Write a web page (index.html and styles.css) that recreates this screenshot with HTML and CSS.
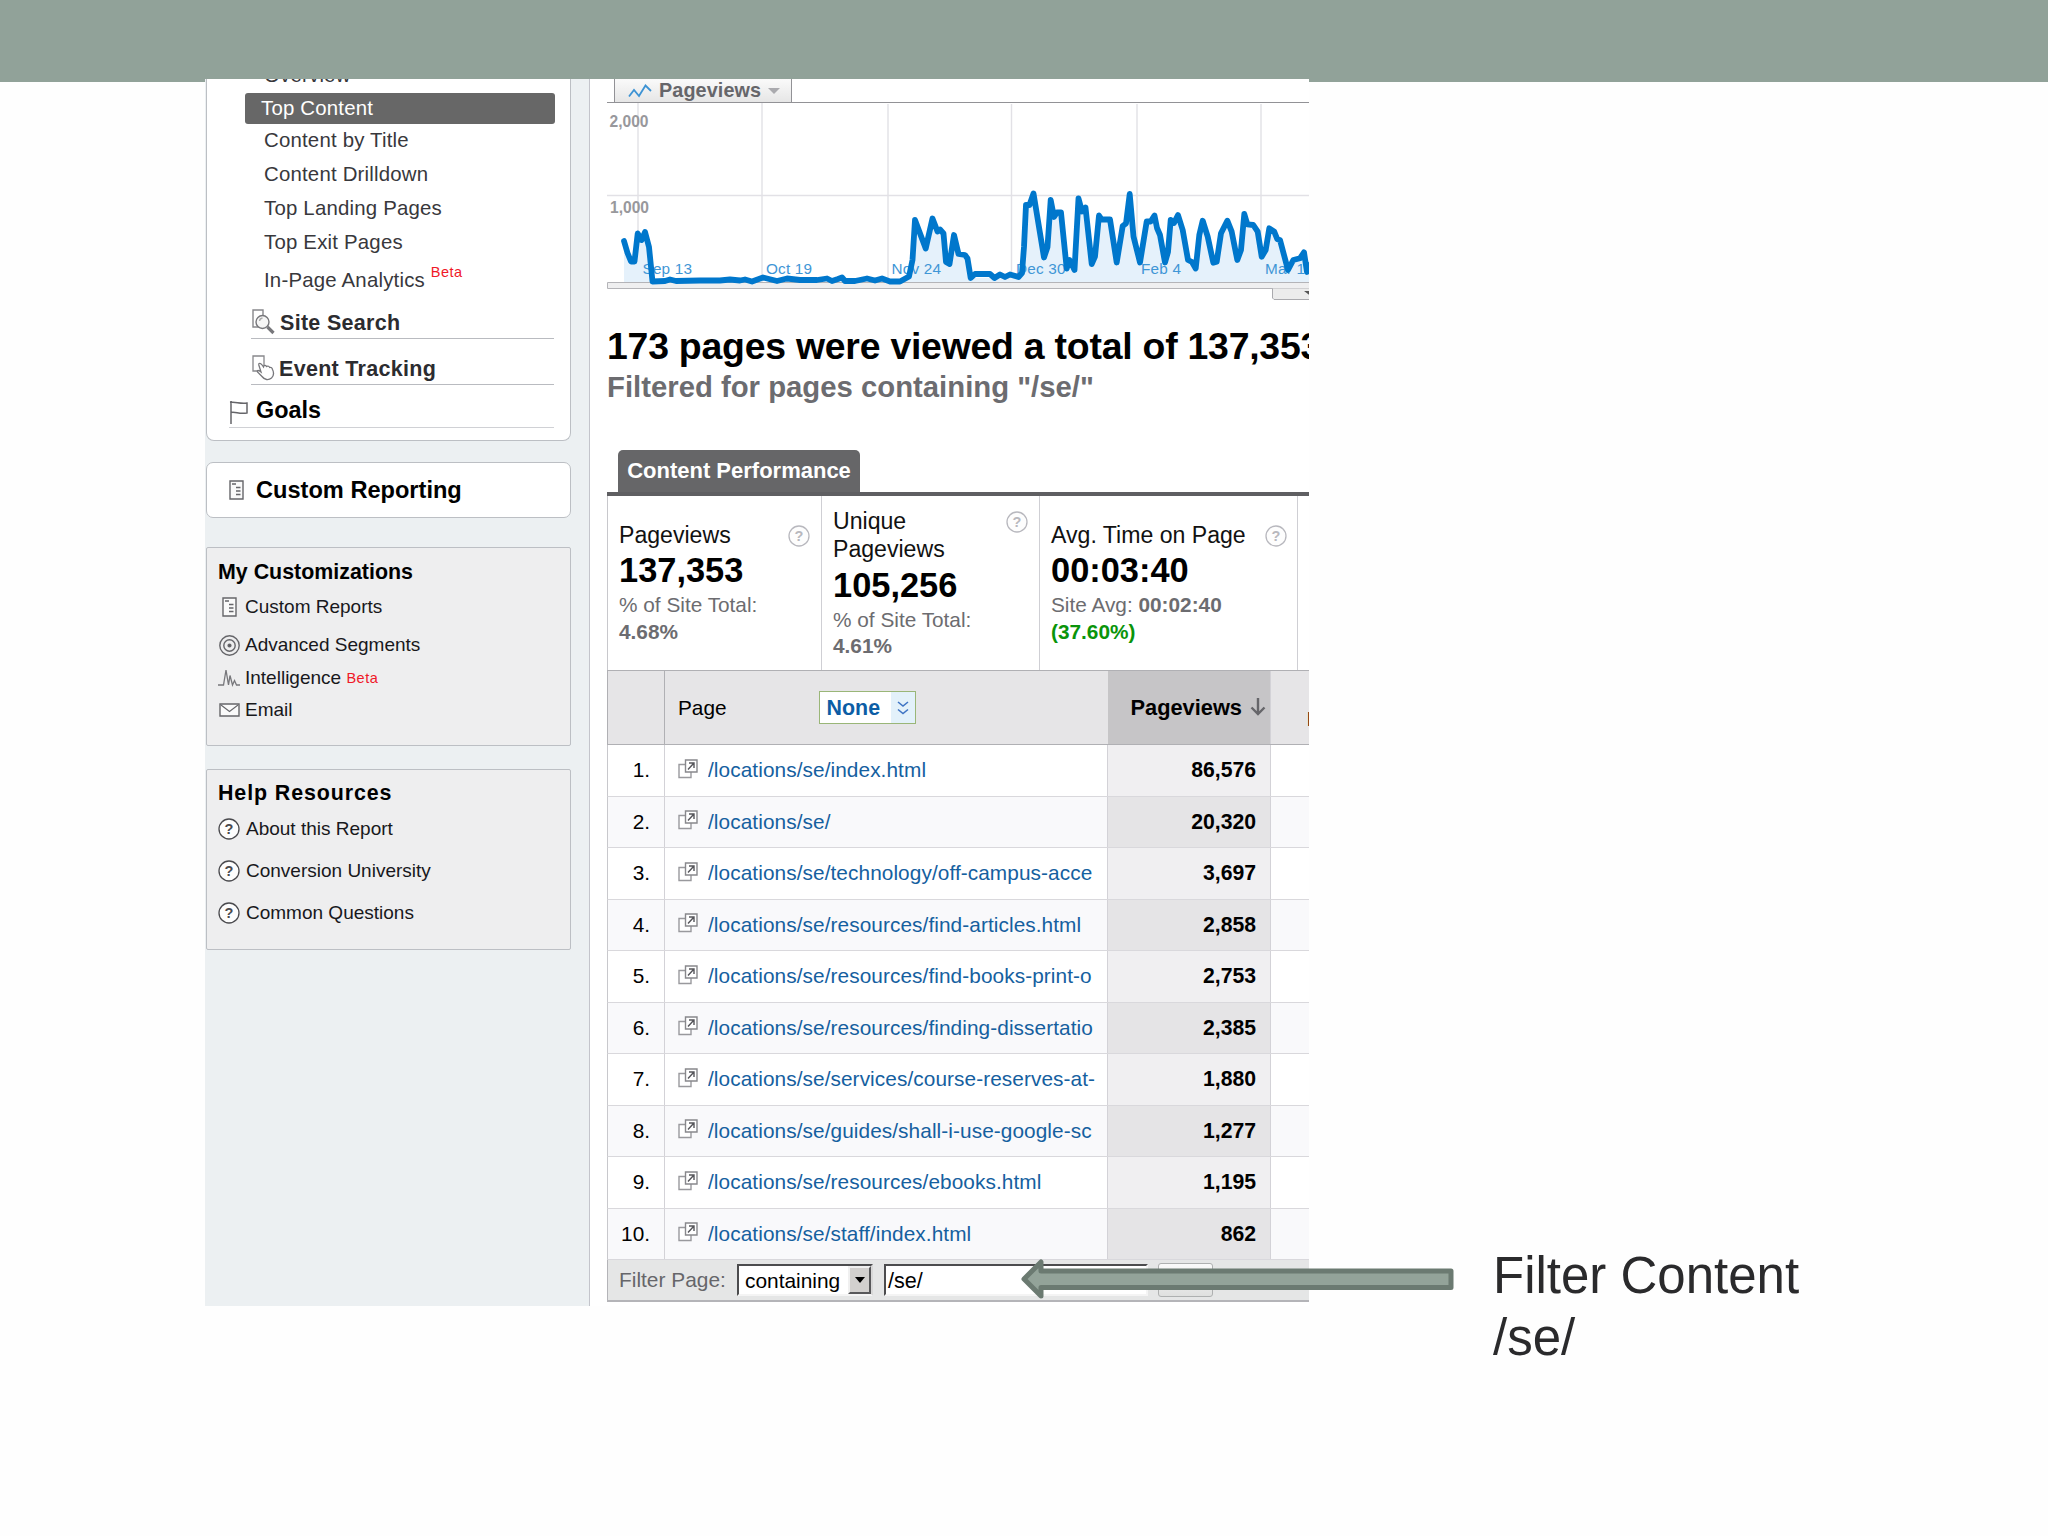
FILE: index.html
```html
<!DOCTYPE html>
<html lang="en">
<head>
  <meta charset="UTF-8" />
  <meta name="viewport" content="width=device-width, initial-scale=1.0" />
  <title>Filter Content</title>
  <link rel="stylesheet" href="styles.css">
</head>
<body>
  <!-- shared icons -->
  <svg class="defs" width="0" height="0">
    <symbol id="i-report" viewBox="0 0 15 20">
      <path d="M1 1h13v18H1z" fill="#fafafa" stroke="#66666a" stroke-width="1.4"/>
      <path d="M3 4h4M7 7.500h4.500M7 11h4.500M7 14.500h4.500" stroke="#66666a" stroke-width="1.4"/>
    </symbol>
    <symbol id="i-help" viewBox="0 0 22 22">
      <circle cx="11" cy="11" r="10" fill="#fdfdfd" stroke="currentColor" stroke-width="1.3"/>
      <text x="11" y="16" text-anchor="middle" class="q">?</text>
    </symbol>
    <symbol id="i-open" viewBox="0 0 20 20">
      <path d="M1 5.500h12v13H1z" fill="#fff" stroke="#99999d" stroke-width="1.4"/>
      <path d="M7.500 1h11.500v12H7.500z" fill="#fff" stroke="#88888c" stroke-width="1.4"/>
      <path d="M10 10.500l5.500-6M11 4h5v5" fill="none" stroke="#55555a" stroke-width="1.4"/>
    </symbol>
  </svg>

  <div class="bar"></div>

  <div class="slide">
    <div class="panel">
      <div class="sidebar">
        <div class="box nav">
          <div class="item first">Overview</div>
          <div class="item selected">Top Content</div>
          <div class="item">Content by Title</div>
          <div class="item">Content Drilldown</div>
          <div class="item">Top Landing Pages</div>
          <div class="item">Top Exit Pages</div>
          <div class="item inpage">In-Page Analytics <span class="beta up">Beta</span></div>
          <div class="section search">
            <svg width="24" height="26" viewBox="0 0 24 26" fill="none" stroke="#77777b" stroke-width="1.4">
              <path d="M2 1h10v17H2z" stroke="#88888c"/>
              <circle cx="11.500" cy="13" r="6.500" fill="#f6f6f6"/>
              <path d="M8.500 12a3.500 3.500 0 0 1 3-3" stroke="#aaa"/>
              <path d="M16.500 18l6 6" stroke-width="3.200"/>
            </svg>
            <span>Site Search</span>
          </div>
          <div class="section event">
            <svg width="24" height="26" viewBox="0 0 24 26" fill="none" stroke="#77777b" stroke-width="1.3">
              <path d="M2 1h11v15H2z" stroke="#88888c"/>
              <path d="M7.500 9c1.500-1.500 3 0 5 3 .5-2 2-2 3-.5 1.500-1 2.800 0 3.200 1 1.500-.5 2.500.5 2.800 2 1.500 3 1.500 6-1 8.500-3 2.500-7 2-9.500-1.500L6.500 17c-.5-2 1-2 3.500 0L7.500 9" fill="#fff"/>
            </svg>
            <span>Event Tracking</span>
          </div>
          <div class="section goals">
            <svg width="20" height="24" viewBox="0 0 20 24" fill="none" stroke="#66666a" stroke-width="1.5">
              <path d="M2 1v23M1 2.500c6-1 9 1.500 17 .5v10c-8 1.500-11-1.500-16-.5"/>
            </svg>
            <span>Goals</span>
          </div>
        </div>

        <div class="box reporting">
          <svg width="15" height="20"><use href="#i-report"/></svg>
          <span>Custom Reporting</span>
        </div>

        <div class="box links custom">
          <h3>My Customizations</h3>
          <div class="link l1"><i><svg width="15" height="20"><use href="#i-report"/></svg></i>Custom Reports</div>
          <div class="link l2"><i><svg width="21" height="21" viewBox="0 0 21 21" fill="none" stroke="#66666a" stroke-width="1.4">
            <circle cx="10.500" cy="10.500" r="9.700"/><circle cx="10.500" cy="10.500" r="5.700"/><circle cx="10.500" cy="10.500" r="1.400" fill="#55555a"/>
          </svg></i>Advanced Segments</div>
          <div class="link l3"><i><svg width="22" height="20" viewBox="0 0 22 20" fill="none" stroke="#77777b" stroke-width="1.3">
            <path d="M0 17h5.500L8 2l2.500 15L12 7.500 14.500 17l2-4.500L18.500 17H22"/>
          </svg></i>Intelligence <span class="beta">Beta</span></div>
          <div class="link l4"><i><svg width="21" height="14" viewBox="0 0 21 14" fill="#fafafa" stroke="#66666a" stroke-width="1.4">
            <path d="M1 1h19v12H1z"/><path d="M2 2l8.500 6.500L19 2" fill="none" stroke-width="1.100"/>
          </svg></i>Email</div>
        </div>

        <div class="box links help">
          <h3>Help Resources</h3>
          <div class="link"><i><svg class="dark" width="22" height="22"><use href="#i-help"/></svg></i>About this Report</div>
          <div class="link"><i><svg class="dark" width="22" height="22"><use href="#i-help"/></svg></i>Conversion University</div>
          <div class="link"><i><svg class="dark" width="22" height="22"><use href="#i-help"/></svg></i>Common Questions</div>
        </div>
      </div>

      <div class="main">
        <div class="tabline">
          <div class="metric">
            <svg width="24" height="14" viewBox="0 0 24 14" fill="none" stroke="#3d93d4" stroke-width="1.800">
              <path d="M1 12.500L6 6l5 6 6.500-10.500L23 7"/>
            </svg>
            <span>Pageviews</span>
            <b class="caret"></b>
          </div>
        </div>

        <svg class="chart" width="702" height="217" viewBox="607 103 702 217">
          <path class="grid" d="M638 103V282M762 103V282M888 104V282M1011.500 104V282M1137 104V282M1261 104V282M607 195.500H1309"/>
          <path class="area" d="M624 282V241L627.500 253 631 261.500H634.500L637.700 233.500 641.700 240 645 232 649 247 652.500 282zM900 282L909 276.500 912.500 260 915 220 925.700 248.500 932.500 218.500 937.500 231.500 943.500 233.500 947.500 263 954 235 958.500 254 965 255 970.700 278 1018.500 277 1022 273 1026 205 1033.500 193.500 1044 257.500 1050.700 200 1054 217 1061 212.500 1066.700 268.500 1074.500 270 1078.500 198.500 1085.500 207.500 1091.700 264 1099 215.500 1110 219.500 1116.700 262.500 1122.700 226 1129.700 194 1140 262.500 1146.700 221.500 1154.500 215.500 1165 262.500 1170.700 220 1178 215 1188 260 1195.700 268.500 1202.700 220.700 1213.300 262.700 1221 233.300 1227.300 220.700 1237.300 260 1244.300 214 1253.300 225 1261.700 256.700 1269.300 228.300 1280 240 1288 270 1304 252.300 1309 270V282z"/>
          <g class="ylabel">
            <text x="609.500" y="127">2,000</text>
            <text x="610" y="212.500">1,000</text>
          </g>
          <g class="xlabel">
            <text x="642.500" y="274">Sep 13</text>
            <text x="766" y="274">Oct 19</text>
            <text x="891.500" y="274">Nov 24</text>
            <text x="1016" y="274">Dec 30</text>
            <text x="1141" y="274">Feb 4</text>
            <text x="1265" y="274">Mar 1</text>
          </g>
          <path class="track" d="M607.500 282.500H1312V288.500H607.500z"/>
          <path class="line" d="M624 241L627.500 253 631 261.500H634.500L637.700 233.500 641.700 240 645 232 649 247 652.500 281.500 665 281 670 279.500 676 281 700 280.500 720 280.500 730 279.500 740 280.500 745 279.500 752 281.500 763 277.500 777 281 787 278.500 800 280 817 280 827 278.500 832 281 838 279 842 277.500 845 281 855 281 867 278.500 875 280.500 882 278.500 890 281.500H900L909 276.500 912.500 260 915 220 925.700 248.500 932.500 218.500 937.500 231.500 940 229.500 943.500 233.500 946 262 949.500 264 954 235 958.500 254 965 255 967.500 258.500 970.700 278 975 274H990L994.500 278 1000 274.500 1005 277 1010 274.500 1018.500 277 1022 273 1024 247 1026 205H1029.500L1033.500 193.500 1044 257.500 1047.500 247 1050.700 200 1054 217 1057 212.500H1061L1066.700 268.500 1069.500 260 1074.500 270 1078.500 198.500 1082 211.500 1085.500 207.500 1091.700 264 1095 256.500 1099 215.500 1101.700 219.500H1110L1116.700 262.500 1122.700 226 1126 223.500 1129.700 194 1133.500 236.500 1140 262.500 1146.700 221.500H1150.700L1154.500 215.500 1157 228 1160 235 1165 262.500 1168 252 1170.700 220 1174 223 1178 215 1182.700 230 1188 260 1192 262 1195.700 268.500 1199.300 235 1202.700 220.700 1207.700 236.700 1213.300 262.700 1216.700 261.700 1221 233.300 1227.300 220.700 1231.700 231.700 1237.300 260 1241 250 1244.300 214 1247.300 224.300 1253.300 225 1257.700 231.700 1261.700 256.700 1265.700 250 1269.300 228.300 1274.300 231.700 1277.300 239.300 1280 240 1288 270 1293.300 260 1300 258.300 1304 252.300 1307 272 1312 262"/>
          <path class="handle" d="M1272.500 288.500V298L1274 299.500H1312V288.500"/>
          <path d="M1304 291h8v6z" fill="#555"/>
        </svg>

        <h1>173 pages were viewed a total of 137,353</h1>
        <h2>Filtered for pages containing "/se/"</h2>

        <div class="perf"><span>Content Performance</span></div>

        <div class="summary">
          <div class="cell c1">
            <div class="label">Pageviews <svg width="22" height="22"><use href="#i-help"/></svg></div>
            <div class="value">137,353</div>
            <div class="sub">% of Site Total:<br><b>4.68%</b></div>
          </div>
          <div class="cell c2">
            <div class="label">Unique<br>Pageviews <svg width="22" height="22"><use href="#i-help"/></svg></div>
            <div class="value">105,256</div>
            <div class="sub">% of Site Total:<br><b>4.61%</b></div>
          </div>
          <div class="cell c3">
            <div class="label">Avg. Time on Page <svg width="22" height="22"><use href="#i-help"/></svg></div>
            <div class="value">00:03:40</div>
            <div class="sub">Site Avg: <b>00:02:40</b><br><b class="green">(37.60%)</b></div>
          </div>
        </div>

        <div class="row head">
          <div class="num"></div>
          <div class="page">Page
            <div class="none"><span>None</span><em><svg width="14" height="16" viewBox="0 0 14 16" fill="none" stroke="#3f74c4" stroke-width="1.600"><path d="M2 2l5 4 5-4M2 9.500l5 4 5-4"/></svg></em></div>
          </div>
          <div class="views">Pageviews
            <svg width="16" height="18" viewBox="0 0 16 18" fill="none" stroke="#66666a" stroke-width="2.400"><path d="M8 0v15.500M1.500 9.500L8 16l6.500-6.500"/></svg>
          </div>
          <div class="rest">P</div>
        </div>
        <div class="row"><div class="num">1.</div><div class="page"><svg width="20" height="20"><use href="#i-open"/></svg><a>/locations/se/index.html</a></div><div class="views">86,576</div><div class="rest"></div></div>
        <div class="row"><div class="num">2.</div><div class="page"><svg width="20" height="20"><use href="#i-open"/></svg><a>/locations/se/</a></div><div class="views">20,320</div><div class="rest"></div></div>
        <div class="row"><div class="num">3.</div><div class="page"><svg width="20" height="20"><use href="#i-open"/></svg><a>/locations/se/technology/off-campus-acce</a></div><div class="views">3,697</div><div class="rest"></div></div>
        <div class="row"><div class="num">4.</div><div class="page"><svg width="20" height="20"><use href="#i-open"/></svg><a>/locations/se/resources/find-articles.html</a></div><div class="views">2,858</div><div class="rest"></div></div>
        <div class="row"><div class="num">5.</div><div class="page"><svg width="20" height="20"><use href="#i-open"/></svg><a>/locations/se/resources/find-books-print-o</a></div><div class="views">2,753</div><div class="rest"></div></div>
        <div class="row"><div class="num">6.</div><div class="page"><svg width="20" height="20"><use href="#i-open"/></svg><a>/locations/se/resources/finding-dissertatio</a></div><div class="views">2,385</div><div class="rest"></div></div>
        <div class="row"><div class="num">7.</div><div class="page"><svg width="20" height="20"><use href="#i-open"/></svg><a>/locations/se/services/course-reserves-at-</a></div><div class="views">1,880</div><div class="rest"></div></div>
        <div class="row"><div class="num">8.</div><div class="page"><svg width="20" height="20"><use href="#i-open"/></svg><a>/locations/se/guides/shall-i-use-google-sc</a></div><div class="views">1,277</div><div class="rest"></div></div>
        <div class="row"><div class="num">9.</div><div class="page"><svg width="20" height="20"><use href="#i-open"/></svg><a>/locations/se/resources/ebooks.html</a></div><div class="views">1,195</div><div class="rest"></div></div>
        <div class="row"><div class="num">10.</div><div class="page"><svg width="20" height="20"><use href="#i-open"/></svg><a>/locations/se/staff/index.html</a></div><div class="views">862</div><div class="rest"></div></div>

        <div class="filter">
          <span class="flabel">Filter Page:</span>
          <div class="select"><span>containing</span><div class="drop"><b></b></div></div>
          <div class="input">/se/</div>
          <div class="go"></div>
        </div>
      </div>
    </div>

    <div class="caption">Filter Content<br>/se/</div>
  </div>

  <!-- arrow lies over the filter bar -->
  <svg class="arrow" width="440" height="46" viewBox="1018 1256 440 46">
    <path d="M1024 1279L1041 1262V1271H1451V1287.500H1041V1296z"/>
  </svg>
</body>
</html>
```
FILE: styles.css
```css
* {
  box-sizing: border-box;
}

body {
  margin: 0;
  width: 2048px;
  height: 1536px;
  overflow: hidden;
  position: relative;
  background-color: #fefefe;
  font-family: "Liberation Sans", Arial, sans-serif;
}

svg {
  display: block;
  flex: none;
}

.defs {
  display: none;
}

.bar {
  height: 82px;
  background-color: #91a299;
}

.slide {
  display: flex;
  margin-top: -3px;
  padding-left: 205px;
}

.panel {
  display: flex;
  width: 1104px;
  height: 1227px;
  overflow: hidden;
  position: relative;
  background-color: #fff;
}

/* sidebar */
.sidebar {
  width: 385px;
  height: 1227px;
  flex: none;
  padding-left: 1px;
  background-color: #ecf0f2;
  border-right: 1px solid #c3c4cb;
}

.box {
  width: 365px;
  border: 1px solid #bcbfc4;
}

.nav {
  height: 362px;
  border-top: none;
  border-radius: 0 0 8px 8px;
  background-color: #fff;
}

.item {
  height: 34px;
  line-height: 32px;
  padding-left: 57px;
  font-size: 20.4px;
  letter-spacing: 0.2px;
  color: #38383c;
  white-space: nowrap;
}

.item.first {
  display: flex;
  align-items: flex-end;
  height: 14px;
  line-height: 36px;
}

.item.selected {
  height: 31px;
  line-height: 30px;
  width: 310px;
  margin-left: 38px;
  padding-left: 16px;
  border-radius: 3px;
  background-color: #676767;
  color: #fff;
}

.item.inpage {
  height: 42px;
  line-height: 41px;
}

.beta {
  font-size: 14.5px;
  letter-spacing: 0.5px;
  color: #f01828;
}

.beta.up {
  position: relative;
  top: -10px;
}

.section {
  display: flex;
  align-items: center;
  height: 34px;
  margin-left: 44px;
  width: 303px;
  border-bottom: 1px solid #b9bbc0;
  font-size: 21.5px;
  font-weight: bold;
  letter-spacing: 0.3px;
  color: #2c2c30;
}

.search {
  margin-top: 3px;
}

.search span {
  margin-left: 5px;
  padding-top: 3px;
}

.event {
  margin-top: 12px;
}

.event span {
  margin-left: 4px;
  padding-top: 3px;
}

.goals {
  margin-top: 7px;
  height: 36px;
  margin-left: 22px;
  width: 325px;
  border-bottom-color: #d0d1d5;
  font-size: 23.4px;
  letter-spacing: 0;
  color: #000;
}

.goals span {
  margin-left: 7px;
  padding-top: 2px;
}

.goals svg {
  margin-top: 5px;
}

.reporting {
  display: flex;
  align-items: center;
  height: 56px;
  margin-top: 21px;
  padding-left: 22px;
  border-radius: 7px;
  background-color: #fff;
  font-size: 23.6px;
  font-weight: bold;
}

.reporting span {
  margin-left: 12px;
}

.links {
  padding: 8px 0 0 11px;
  border-radius: 2px;
  background-color: #eeeeef;
}

.links h3 {
  margin: 0;
  height: 32px;
  line-height: 33px;
  font-size: 21.4px;
}

.link {
  display: flex;
  align-items: center;
  height: 42px;
  font-size: 19px;
  white-space: pre;
  color: #18181c;
}

.link i {
  display: flex;
  justify-content: center;
  width: 22px;
  margin-right: 5px;
  font-style: normal;
}

.custom {
  height: 199px;
  margin-top: 29px;
}

.custom .l1 { height: 38px; }
.custom .l2 { height: 38px; }
.custom .l3 { height: 28px; }
.custom .l4 { height: 36px; }

.help {
  height: 181px;
  margin-top: 23px;
}

.help h3 {
  height: 30px;
  line-height: 31px;
  letter-spacing: 0.9px;
}

.help .link i {
  margin-right: 6px;
}

.q {
  font-size: 14.5px;
  font-weight: bold;
  fill: currentColor;
}

.dark {
  color: #4a4a4e;
}

/* main report */
.main {
  width: 702px;
  margin-left: 17px;
  flex: none;
}

.tabline {
  height: 24px;
  padding-left: 7px;
  border-bottom: 1px solid #929296;
}

.metric {
  display: flex;
  align-items: center;
  width: 178px;
  height: 23px;
  padding-left: 13px;
  border: 1px solid #929296;
  border-width: 0 1px;
  background: linear-gradient(#fafafa, #e6e6e6);
  font-size: 19.8px;
  font-weight: bold;
  letter-spacing: 0.1px;
  color: #66666a;
}

.metric span {
  margin-left: 7px;
}

.caret {
  margin-left: 7px;
  border: 6px solid transparent;
  border-top-color: #aaaaae;
  border-bottom: none;
}

.grid {
  fill: none;
  stroke: #e2e1e6;
  stroke-width: 1.4;
}

.area {
  fill: #e5f1fb;
}

.ylabel {
  font-size: 15.6px;
  font-weight: bold;
  fill: #98989c;
}

.xlabel {
  font-size: 15.3px;
  letter-spacing: 0.2px;
  fill: #3f96d6;
}

.track {
  fill: #efeff0;
  stroke: #b4b4b8;
}

.line {
  fill: none;
  stroke: #0077cc;
  stroke-width: 5.8;
  stroke-linejoin: round;
  stroke-linecap: round;
}

.handle {
  fill: #ececec;
  stroke: #aaaaae;
}

h1 {
  margin: 0;
  height: 51px;
  line-height: 52px;
  font-size: 37.4px;
  letter-spacing: -0.23px;
  white-space: nowrap;
  color: #000;
}

h2 {
  margin: 0;
  height: 31px;
  line-height: 32px;
  font-size: 29.3px;
  color: #6c6c70;
}

.perf {
  display: flex;
  margin-top: 48px;
  padding-left: 11px;
  border-bottom: 4px solid #5f5f62;
}

.perf span {
  width: 242px;
  height: 42px;
  line-height: 41px;
  text-align: center;
  border-radius: 5px 5px 0 0;
  background-color: #666668;
  font-size: 22px;
  font-weight: bold;
  color: #fff;
}

.summary {
  display: flex;
  height: 174px;
  border-left: 1px solid #c8c8cc;
}

.cell {
  display: flex;
  flex-direction: column;
  justify-content: center;
  padding-left: 11px;
  border-right: 1px solid #cfcfd4;
}

.c1 { width: 214px; }
.c2 { width: 218px; }
.c3 { width: 258px; }

.label {
  display: flex;
  justify-content: space-between;
  padding-right: 11px;
  line-height: 28.5px;
  font-size: 23.1px;
  color: #111;
}

.c3 .label {
  padding-right: 10px;
}

.label svg {
  margin-top: 4px;
  color: #b8b8be;
}

.value {
  line-height: 43px;
  font-size: 34.4px;
  font-weight: bold;
}

.sub {
  line-height: 26.5px;
  font-size: 20.8px;
  color: #6c6c70;
}

.green {
  color: #0a940a;
}

.row {
  display: flex;
  height: 51.5px;
  border-left: 1px solid #c8c8cc;
  border-bottom: 1px solid #d9d8dc;
  font-size: 20.8px;
  background-color: #fff;
}

.row > div {
  display: flex;
  flex: none;
  align-items: center;
}

.row .num {
  width: 57px;
  padding-right: 14px;
  justify-content: flex-end;
  border-right: 1px solid #d3d2d7;
}

.row .page {
  width: 443px;
  padding-left: 13px;
  border-right: 1px solid #d3d2d7;
}

.row .page > svg {
  margin-top: -3px;
}

.row a {
  margin-left: 10px;
  width: 390px;
  overflow: hidden;
  white-space: nowrap;
  letter-spacing: 0.08px;
  color: #15609f;
}

.row .views {
  width: 163px;
  padding-right: 14px;
  justify-content: flex-end;
  border-right: 1px solid #d3d2d7;
  background-color: #f0eff1;
  font-size: 21.2px;
  font-weight: bold;
}

.row:nth-child(odd of .row) {
  background-color: #f9f9fb;
}

.row:nth-child(odd of .row) .views {
  background-color: #e5e4e6;
}

.row .rest {
  width: 38px;
}

.main .row.head {
  height: 75px;
  border: 1px solid #b0b0b4;
  border-right: none;
  background-color: #e6e5e7;
}

.head .num {
  border-right-color: #b0b0b4;
}

.head .page {
  border-right: none;
}

.main .row.head .views {
  padding-right: 4px;
  background-color: #c6c5c7;
  font-size: 21.8px;
}

.head .views svg {
  margin-left: 8px;
  margin-top: -2px;
}

.head .rest {
  padding: 24px 0 0 36px;
  font-size: 20px;
  font-weight: bold;
}

.none {
  display: flex;
  width: 97px;
  height: 33px;
  margin-left: 92px;
  border: 1.4px solid #9ab678;
  background-color: #fff;
  font-size: 21.4px;
  font-weight: bold;
  color: #0c5da5;
}

.none span {
  width: 71px;
  line-height: 32px;
  padding-left: 7px;
}

.none em {
  display: flex;
  flex: 1;
  align-items: center;
  justify-content: center;
  background-color: #e3f1fa;
}

.filter {
  display: flex;
  align-items: center;
  height: 42px;
  border: 1px solid #b4b4b8;
  border-top-width: 0;
  border-bottom-width: 2px;
  border-right: none;
  background-color: #e5e6e6;
  font-size: 20.9px;
}

.flabel {
  width: 129px;
  padding-left: 11px;
  color: #66666a;
}

.select {
  display: flex;
  justify-content: space-between;
  width: 136px;
  height: 32px;
  border: 2px solid #4c4c4e;
  border-right-color: #d8d8d8;
  border-bottom-color: #f4f4f4;
  background-color: #fff;
}

.select span {
  line-height: 30px;
  padding-left: 6px;
}

.drop {
  display: flex;
  align-items: center;
  justify-content: center;
  width: 23px;
  background-color: #d2d0ce;
  border: 2px solid #f0f0f0;
  border-right-color: #58585a;
  border-bottom-color: #58585a;
}

.drop b {
  border: 5.5px solid transparent;
  border-top: 6px solid #000;
  border-bottom: none;
}

.input {
  width: 264px;
  height: 32px;
  margin-left: 11px;
  padding-left: 2px;
  line-height: 30px;
  font-size: 21.6px;
  border: 2px solid #4c4c4e;
  border-right-color: #f4f4f4;
  border-bottom-color: #f4f4f4;
  background-color: #fff;
}

.go {
  width: 55px;
  height: 34px;
  margin-left: 10px;
  border: 1px solid #aeb0b0;
  border-radius: 3px;
  background: linear-gradient(#fafafa, #dfe0df);
}

/* slide annotations */
.caption {
  margin: 1166px 0 0 184px;
  line-height: 61.5px;
  font-size: 51px;
  color: #2a2a2c;
}

.arrow {
  position: absolute;
  left: 1018px;
  top: 1256px;
}

.arrow path {
  fill: #93a399;
  stroke: #6b7a71;
  stroke-width: 5;
  stroke-linejoin: round;
}
```
